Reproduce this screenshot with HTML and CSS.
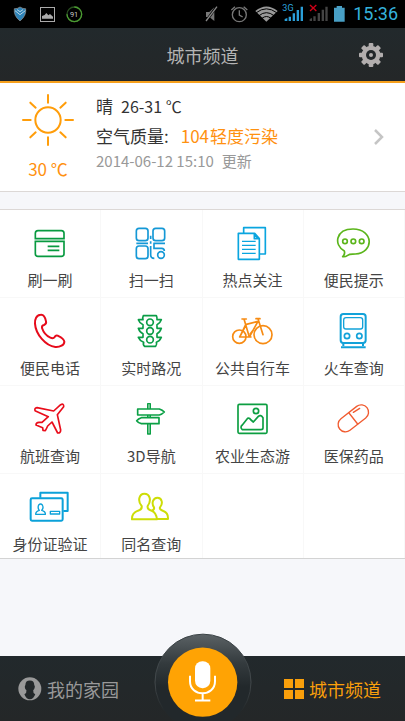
FILE: index.html
```html
<!DOCTYPE html>
<html lang="zh-CN">
<head>
<meta charset="utf-8">
<meta name="viewport" content="width=device-width, initial-scale=1">
<title>城市频道</title>
<link rel="stylesheet" href="styles.css">
</head>
<body>
<div class="status">
  <svg class="status-left" viewBox="0 0 270 84" aria-hidden="true">
    <path d="M60 21Q69 27 77 26Q80 47 60 63Q40 47 43 26Q52 27 60 21z" fill="#2d83b8" stroke="#999" stroke-width="2"/>
    <path d="M45 32L60 44L76 32M51 29L60 35L69 29" fill="none" stroke="#b9d5e5" stroke-width="3"/>
    <rect x="121.500" y="22.500" width="42" height="42" fill="none" stroke="#aaa" stroke-width="3"/>
    <path d="M126 56V48L134 45L139 39L145 46L150 42L159 50V56z" fill="#aaa"/>
    <circle cx="223" cy="43" r="22" fill="none" stroke="#294f20" stroke-width="4"/>
    <path d="M223 21A22 22 0 1 1 201 43" fill="none" stroke="#4b9b32" stroke-width="4"/>
    <text class="meter" x="222" y="51">91</text>
  </svg>
  <svg class="status-right" viewBox="0 0 438 84" aria-hidden="true">
    <path d="M12 36H22L37 22V63L22 51H12z" fill="#777"/><path d="M12 64L45 18" stroke="#000" stroke-width="8"/><path d="M12 63L45 20" stroke="#888" stroke-width="4"/>
    <g fill="none" stroke="#777" stroke-width="4"><circle cx="112" cy="44" r="21"/><path d="M112 31V45L122 51M88 30L99 20M125 20L136 30"/></g>
    <path d="M193 65L160 33Q193 6 227 33z" fill="#999"/><path d="M163 38Q193 15 224 38M171 47Q193 29 216 47M180 55Q193 44 207 55" fill="none" stroke="#000" stroke-width="3"/>
    <text class="network" x="241" y="34">3G</text>
    <path d="M248 63V57L256 54V63zM260 63V50H267V63zM272 63V40H279V63zM284 63V30H291V63zM296 63V20H303V63z" fill="#2b9fd9"/>
    <path d="M323 63V57L330 54V63zM334 63V49H341V63zM347 63V39H354V63zM359 63V29H366V63zM370 63V20H377V63z" fill="#444"/>
    <path d="M324 15L343 33M343 15L324 33" stroke="#d00018" stroke-width="4"/>
    <path d="M396 65V23H404V18H420V23H428V65z" fill="#489fc5"/>
  </svg>
  <time class="clock">15:36</time>
</div>
<header class="header">
  <h1 class="title">城市频道</h1>
  <button class="settings" aria-label="设置">
    <svg viewBox="-36 -36 72 72" aria-hidden="true">
      <g fill="#b2aeae"><g id="teeth"><rect x="-7" y="-36" width="14" height="72" rx="3"/><rect x="-36" y="-7" width="72" height="14" rx="3"/></g><use href="#teeth" transform="rotate(45)"/><circle r="28"/></g>
      <circle r="15" fill="#22272a"/><circle r="6" fill="#b2aeae"/>
    </svg>
  </button>
</header>
<main>
  <a class="weather" href="#weather">
    <span class="now">
      <svg class="sun" viewBox="67 41 156 156" fill="none" stroke="#ff9d0a" stroke-width="6" stroke-linecap="round" aria-hidden="true"><circle cx="145" cy="119" r="38"/><path d="M145 44V67M145 171V194M70 119H93M197 119H220M92 67L108 82M182 156L198 171M92 171L108 156M182 82L198 67"/></svg>
      <span class="temp">30 ℃</span>
    </span>
    <span class="details">
      <span class="line">晴 <span class="range">26-31 ℃</span></span>
      <span class="line air">空气质量: <span class="quality"><span>104</span><span>轻度污染</span></span></span>
      <span class="updated"><span>2014-06-12 15:10</span> <span>更新</span></span>
    </span>
    <svg class="chevron" viewBox="0 0 12 18" aria-hidden="true"><path d="M2 2L9 9L2 16" fill="none" stroke="#c5c5c5" stroke-width="2.500"/></svg>
  </a>
  <nav class="services" aria-label="城市服务">
    <a class="service" href="#card"><svg viewBox="80 60 144 108" fill="none" stroke="#089a40" stroke-width="5" aria-hidden="true"><path d="M108 101V85Q108 77 116 77H186Q194 77 194 85V101zM108 109H194V146Q194 154 186 154H116Q108 154 108 146zM145 124H180M145 136H180"/></svg><span>刷一刷</span></a>
    <a class="service" href="#scan"><svg viewBox="384 60 144 108" fill="none" stroke="#1498d6" stroke-width="5" aria-hidden="true"><rect x="412" y="70" width="35" height="37" rx="8"/><rect x="462" y="70" width="35" height="37" rx="8"/><rect x="412" y="123" width="35" height="38" rx="8"/><path d="M412 115H447M455 92V102M455 109V116M463 115H498M455 123V150Q455 160 466 160M465 115V130H488Q496 130 496 138"/><circle cx="486" cy="150" r="10"/></svg><span>扫一扫</span></a>
    <a class="service" href="#news"><svg viewBox="81 60 144 108" fill="none" stroke="#0aa5df" stroke-width="5" stroke-linejoin="round" aria-hidden="true"><path d="M109 85H158L172 101V163H109zM125 83V68H190V147H174M157 86V101H172M157 88L170 102"/><path d="M120 109H161M120 121H161M120 133H161M120 145H161" stroke-width="4"/></svg><span>热点关注</span></a>
    <a class="service" href="#tips"><svg viewBox="385 60 144 108" fill="none" stroke="#5bb51b" stroke-width="5" stroke-linejoin="round" aria-hidden="true"><path d="M428 138C395 120 402 72 454 72C517 72 518 144 461 147C451 148 445 146 438 151Q431 156 423 155Q431 147 428 138z"/><circle cx="430" cy="109" r="7"/><circle cx="455" cy="109" r="7"/><circle cx="480" cy="109" r="7"/></svg><span>便民提示</span></a>
    <a class="service" href="#phone"><svg viewBox="80 48 144 108" fill="none" stroke="#e60b1b" stroke-width="6" stroke-linejoin="round" aria-hidden="true"><path d="M124 53C111 54 106 67 107 80C109 112 139 147 168 150C182 151 195 144 195 134C194 125 183 120 175 116Q169 114 166 120Q162 126 153 122C142 117 132 105 128 93Q127 85 134 84Q142 81 140 73C138 62 132 52 124 53z"/></svg><span>便民电话</span></a>
    <a class="service" href="#traffic"><svg viewBox="384 48 144 108" fill="none" stroke="#0a9d46" stroke-width="5" stroke-linejoin="round" aria-hidden="true"><path d="M433 56H472Q475 62 474 68H487Q483 79 474 83V94H487Q483 106 474 110V121H487Q483 132 472 136Q475 142 470 148H437Q431 143 434 136Q423 132 418 121H432V110Q422 106 418 94H432V83Q422 79 418 68H432Q430 62 433 56z"/><circle cx="453" cy="76" r="10"/><circle cx="453" cy="102" r="10"/><circle cx="453" cy="128" r="10"/></svg><span>实时路况</span></a>
    <a class="service" href="#bike"><svg viewBox="81 48 144 108" fill="none" stroke="#f78b12" stroke-width="5" stroke-linejoin="round" stroke-linecap="round" aria-hidden="true"><circle cx="112" cy="119" r="20"/><circle cx="183" cy="113" r="27"/><path d="M113 120L133 82L168 73L142 120L126 66M120 66H133M142 120L113 120M131 83L113 120M183 113L168 65M162 65H174M126 120H147M145 110L153 100"/></svg><span>公共自行车</span></a>
    <a class="service" href="#train"><svg viewBox="385 48 144 108" fill="none" stroke="#12a2d9" stroke-width="6" stroke-linejoin="round" aria-hidden="true"><rect x="417" y="51" width="75" height="87" rx="8"/><rect x="426" y="62" width="57" height="34" rx="7" stroke-width="4"/><circle cx="436" cy="117" r="8" stroke-width="5"/><circle cx="473" cy="117" r="8" stroke-width="5"/><path d="M425 138V147M484 138V147M418 151H492"/></svg><span>火车查询</span></a>
    <a class="service" href="#flight"><svg viewBox="80 48 144 108" fill="none" stroke="#e90d1b" stroke-width="5" stroke-linejoin="round" aria-hidden="true"><path d="M163 78L184 59Q194 54 193 65L174 89L184 135Q184 145 175 144L158 111L145 123Q141 132 138 137L131 136L130 128L110 120Q110 112 119 112H128L147 95L107 77Q105 69 113 68z"/></svg><span>航班查询</span></a>
    <a class="service" href="#navigation"><svg viewBox="384 48 144 108" fill="#fff" stroke="#0ba045" stroke-width="5" stroke-linejoin="round" aria-hidden="true"><rect x="446" y="56" width="8" height="91" fill="#a3d9b7" stroke-width="4"/><path d="M416 72H481Q490 75 496 81Q489 88 481 90H416zM480 98H427Q418 101 413 107Q418 114 427 116H480z"/></svg><span>3D导航</span></a>
    <a class="service" href="#farm"><svg viewBox="81 48 144 108" fill="none" stroke="#0c9e41" stroke-width="5" stroke-linejoin="round" aria-hidden="true"><rect x="108" y="58" width="87" height="87" rx="4"/><circle cx="162" cy="78" r="8"/><path d="M121 134Q113 126 121 120L137 100Q142 97 147 105L154 111L169 94Q176 88 183 98V129Q183 134 177 134z"/></svg><span>农业生态游</span></a>
    <a class="service" href="#medicine"><svg viewBox="385 48 144 108" fill="none" stroke="#f15b30" stroke-width="4" stroke-linecap="round" aria-hidden="true"><rect x="403" y="78" width="104" height="44" rx="22" transform="rotate(-38 455 100)"/><path d="M442 84L468 117M455 82L474 70"/></svg><span>医保药品</span></a>
    <a class="service" href="#identity"><svg viewBox="80 48 144 108" fill="none" stroke="#0ba1d9" stroke-width="6" stroke-linejoin="round" aria-hidden="true"><rect x="94" y="76" width="96" height="67" rx="4"/><path d="M123 74V59H205V114H192"/><g stroke-width="4"><rect x="153" y="115" width="28" height="8"/><path d="M109 124Q109 115 120 112Q114 105 118 96Q124 90 129 96Q134 105 127 112Q139 115 138 124z"/></g></svg><span>身份证验证</span></a>
    <a class="service" href="#name"><svg viewBox="384 48 144 108" fill="none" stroke="#cddd06" stroke-width="6" stroke-linejoin="round" aria-hidden="true"><path d="M399 139Q398 120 417 113Q430 110 428 99C415 85 420 62 436 62C453 62 458 83 446 99Q444 109 458 113Q471 117 474 139zM458 113Q467 110 465 103C456 90 463 74 475 74C489 74 493 92 483 103Q480 109 493 114Q508 119 507 138H474"/></svg><span>同名查询</span></a>
    <span class="service"></span>
    <span class="service"></span>
  </nav>
</main>
<footer class="tabs">
  <a class="tab" href="#home"><svg class="person" viewBox="54 169 71 71" aria-hidden="true"><circle cx="89" cy="204" r="34" fill="#999"/><path d="M76 192Q76 179 89 179T102 192L104 198Q103 205 99 208Q98 217 105 220Q100 235 89 235T73 220Q80 217 79 208Q74 205 74 198z" fill="#23282a"/></svg>我的家园</a>
  <button class="voice" aria-label="语音">
    <svg viewBox="459 40 294 263" aria-hidden="true">
      <defs><linearGradient id="rim" x1="0" y1="0" x2="0" y2="1"><stop offset="0" stop-color="#5b6265"/><stop offset=".3" stop-color="#343b3e"/><stop offset=".55" stop-color="#22282b"/></linearGradient><linearGradient id="edge" x1="0" y1="0" x2="0" y2="1"><stop offset="0" stop-color="#3a4245"/><stop offset=".5" stop-color="#43494c"/><stop offset=".8" stop-color="#23282a"/></linearGradient></defs>
      <circle cx="606" cy="187" r="144" fill="url(#rim)" stroke="url(#edge)" stroke-width="3"/>
      <circle cx="605" cy="187" r="104" fill="#ffa304"/>
      <rect x="582" y="124" width="46" height="81" rx="22" fill="#fff"/>
      <path d="M567 168V184C567 232 642 232 642 184V168M605 220V242M582 242H628" fill="none" stroke="#fff" stroke-width="6"/>
    </svg>
  </button>
  <a class="tab current" href="#city"><svg class="tiles" viewBox="0 0 20 20" aria-hidden="true"><path d="M0 0H9V9H0zM11 0H20V9H11zM0 11H9V20H0zM11 11H20V20H11z" fill="#f99f0b"/></svg>城市频道</a>
</footer>
</body>
</html>
```
FILE: styles.css
```css
* { box-sizing: border-box; }
body {
  margin: 0;
  min-height: 100vh;
  display: flex;
  flex-direction: column;
  background: #f6f7fa;
  color: #333;
  font-family: "Noto Sans CJK SC", sans-serif;
}
a { color: inherit; text-decoration: none; }
button { padding: 0; border: 0; background: none; }
svg { display: block; flex-shrink: 0; }
.status {
  display: flex;
  align-items: center;
  height: 28px;
  padding-right: 7px;
  background: #000;
}
.status-left { width: 90px; height: 28px; margin-right: auto; }
.status-right { width: 146px; height: 28px; margin-right: 5px; }
.meter { fill: #ccc; font: 22px Roboto, sans-serif; text-anchor: middle; }
.network { fill: #2ba5df; font: 27px Roboto, sans-serif; }
.clock { color: #35b2dd; font: 18px/28px Roboto, sans-serif; }
.header {
  display: grid;
  grid-template-columns: 1fr auto 1fr;
  align-items: center;
  height: 55px;
  padding: 0 22px;
  border-bottom: 2px solid #f6a01c;
  background: linear-gradient(#22292c, #242728);
}
.title {
  grid-column: 2;
  margin: 0;
  color: #b4b4b4;
  font-size: 18px;
  font-weight: 400;
  line-height: 28px;
}
.settings { justify-self: end; }
.settings svg { width: 24px; height: 24px; }
.weather {
  display: flex;
  align-items: center;
  padding: 8px 20px 20px 22px;
  border-bottom: 1px solid #dcd8d6;
  background: #fff;
}
.now { display: flex; flex-direction: column; align-items: center; width: 52px; }
.sun { width: 52px; height: 52px; margin-top: 3px; }
.temp {
  margin-top: 10px;
  margin-bottom: -10px;
  color: #ff9110;
  font-size: 17px;
  line-height: 25px;
  white-space: nowrap;
}
.details { display: flex; flex-direction: column; flex: 1; margin-left: 22px; }
.line { display: flex; gap: 8px; font-size: 17px; line-height: 30px; }
.range { font-size: 16px; }
.air { gap: 12px; }
.quality { display: flex; gap: 1px; color: #ff9110; }
.updated { display: flex; gap: 8px; color: #999; font-size: 15px; line-height: 20px; }
.chevron { width: 12px; height: 18px; margin-top: 12px; }
.services {
  display: grid;
  grid-template-columns: repeat(4, 1fr);
  margin-top: 17px;
  border-top: 1px solid #dcd8d6;
  border-bottom: 1px solid #d3d3d3;
  background: #fff;
}
.service {
  display: flex;
  flex-direction: column;
  align-items: center;
  gap: 9px;
  padding: 15px 0 7px;
  border-right: 1px solid #f8f8f8;
  border-bottom: 1px solid #f8f8f8;
  color: #444;
  font-size: 15px;
  line-height: 20px;
}
.service:nth-child(n+13) { padding-bottom: 4px; border-bottom: 0; }
.service svg { width: 48px; height: 36px; }
.tabs {
  position: relative;
  display: flex;
  justify-content: space-between;
  height: 65px;
  margin-top: auto;
  padding: 0 24px 0 18px;
  background: linear-gradient(#22292c, #242728);
}
.tab {
  display: flex;
  align-items: center;
  gap: 5px;
  color: #999;
  font-size: 18px;
}
.current { color: #f99f0b; }
.person { width: 24px; height: 24px; }
.tiles { width: 20px; height: 20px; }
.voice { position: absolute; bottom: 0; left: 50%; transform: translateX(-50%); }
.voice svg { width: 98px; height: 88px; }
```
